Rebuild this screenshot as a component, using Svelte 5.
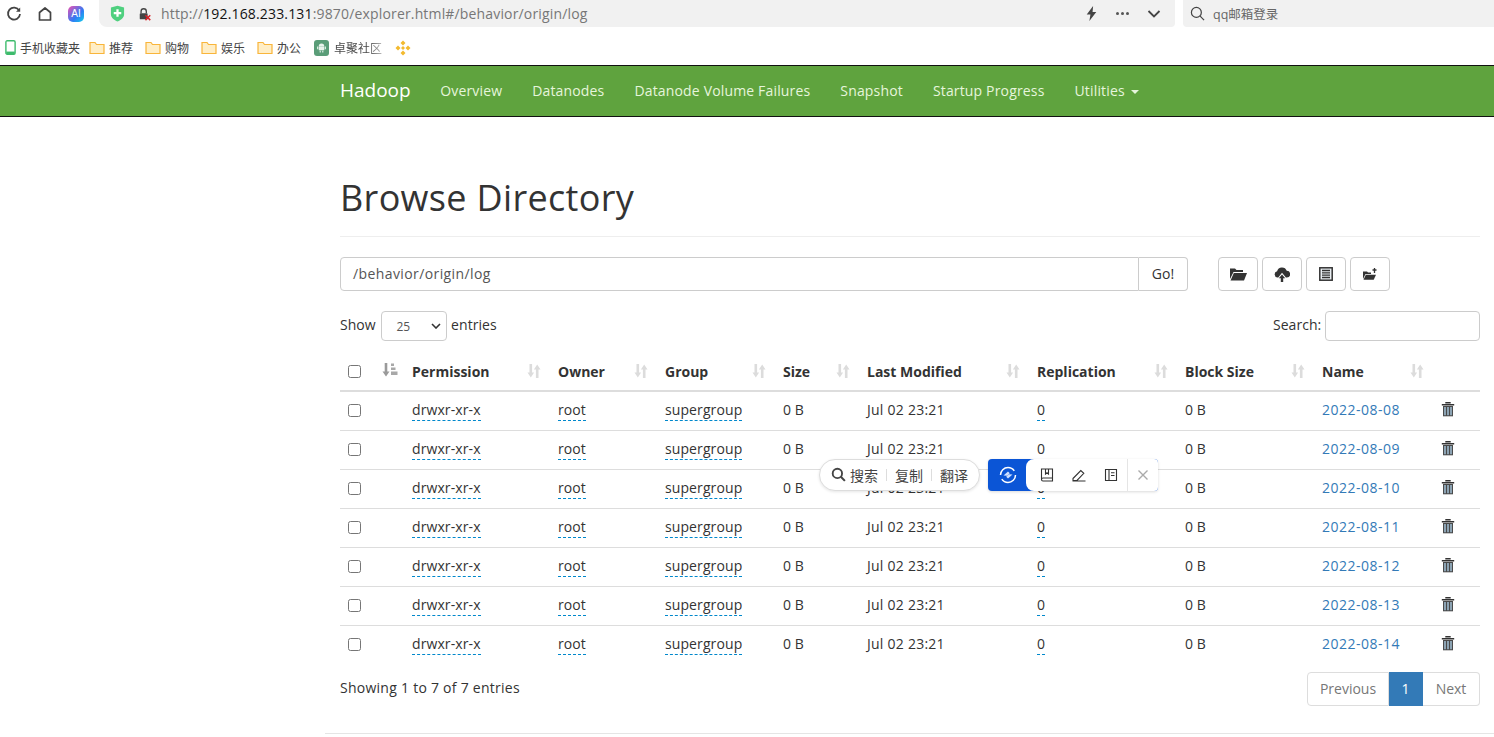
<script>
  const rows = ['2022-08-08','2022-08-09','2022-08-10','2022-08-11','2022-08-12','2022-08-13','2022-08-14'];
  const heads = [['Permission',550],['Owner',657],['Group',775],['Size',859],['Last Modified',1029],['Replication',1177],['Block Size',1314],['Name',1433]];
  const navs = ['Overview','Datanodes','Datanode Volume Failures','Snapshot','Startup Progress'];
  const bookmarks = ['推荐','购物','娱乐','办公'];
</script>

<div class="chrome">
  <div class="topbar">
    <svg class="ic reload" viewBox="0 0 16 16"><path d="M13.2 4.6A6 6 0 1 0 14 8" fill="none" stroke="#444" stroke-width="1.8"/><path d="M14.2 1.6v4.2H10z" fill="#444"/></svg>
    <svg class="ic home" viewBox="0 0 16 16"><path d="M2.5 14V6.5L8 2l5.500 4.500V14z" fill="none" stroke="#444" stroke-width="1.700" stroke-linejoin="round"/></svg>
    <span class="ai">AI</span>
    <div class="addr">
      <svg class="shield" viewBox="0 0 16 18"><path d="M1 2.500 8 .8l7 1.700v7.500c0 3.500-3.500 6-7 7.500-3.500-1.500-7-4-7-7.500z" fill="#4fd07f"/><path d="M8 4.500v8M4 8.500h8" stroke="#fff" stroke-width="2.400"/></svg>
      <svg class="lock" viewBox="0 0 16 16"><path d="M3.500 7V5a3 3 0 0 1 6 0v2" fill="none" stroke="#444" stroke-width="1.500"/><rect x="2" y="7" width="9" height="7" rx="1" fill="#444"/><path d="M8.500 9.500l5.500 5.500M14 9.500l-5.500 5.500" stroke="#d8232a" stroke-width="1.800"/></svg>
      <span class="url">http://<b>192.168.233.131</b>:9870/explorer.html#/behavior/origin/log</span>
      <svg class="bolt" viewBox="0 0 14 16"><path d="M8.500 1 2.500 9h3.500L5 15l6.500-8.500H8z" fill="#444"/></svg>
      <span class="dots"><i></i><i></i><i></i></span>
      <svg class="chev" viewBox="0 0 14 10"><path d="M1.500 2l5.500 5.500L12.500 2" fill="none" stroke="#444" stroke-width="1.800"/></svg>
    </div>
    <div class="search">
      <svg class="mag" viewBox="0 0 16 16"><circle cx="6.800" cy="6.800" r="5.300" fill="none" stroke="#444" stroke-width="1.300"/><path d="m10.800 10.800 4.200 4.200" stroke="#444" stroke-width="1.300"/></svg>
      <span>qq邮箱登录</span>
    </div>
  </div>
  <div class="bookmarks">
    <span class="bm first"><svg class="phone" viewBox="0 0 10 14"><rect x=".7" y=".7" width="8.600" height="12.600" rx="1.200" fill="none" stroke="#3dbb6c" stroke-width="1.300"/><rect x="1" y="10.800" width="8" height="2.400" fill="#3dbb6c"/></svg>手机收藏夹</span>
    {#each bookmarks as b}
      <span class="bm"><svg class="folder" viewBox="0 0 16 14"><path d="M1 12.500V1.500h5l1.500 2H15v9z" fill="#ffeec6" stroke="#f9b53a" stroke-width="1.200"/></svg>{b}</span>
    {/each}
    <span class="bm last"><span class="droid"><svg viewBox="0 0 12 12"><path d="M3 4.500a3 3 0 0 1 6 0zM3 5h6v4H3zM1.200 5h1.200v3H1.200zM9.600 5h1.200v3H9.600zM4 9.500h1.200V11.500H4zM6.800 9.500H8V11.500H6.800z" fill="#e8f3ec"/></svg></span><span class="fade">卓聚社区</span></span>
    <svg class="bnb" viewBox="0 0 16 16"><path d="M8 .5l2.500 2.500L8 5.500 5.500 3zM3 5.500 5.500 8 3 10.500.5 8zM13 5.500 15.500 8 13 10.500 10.500 8zM8 6 10 8 8 10 6 8zM8 10.500l2.500 2.500L8 15.500 5.500 13z" fill="#f3ba2f"/></svg>
  </div>
</div>

<nav class="navbar">
  <div class="nav-inner">
    <span class="brand">Hadoop</span>
    {#each navs as n}<span class="nav-link">{n}</span>{/each}
    <span class="nav-link">Utilities <i class="caret"></i></span>
  </div>
</nav>

<main class="container">
  <header class="page-header"><h1>Browse Directory</h1></header>

  <div class="path-row">
    <div class="input-group">
      <div class="path-input">/behavior/origin/log</div>
      <div class="go">Go!</div>
    </div>
    <div class="tools">
      <span class="tool"><svg viewBox="0 0 18 14" width="18" height="14"><path d="M1 12V1.500h5l1.500 1.500H14v2H4.500z" fill="#333"/><path d="M4.800 6H18l-3 7.500H1.500z" fill="#333"/></svg></span>
      <span class="tool"><svg viewBox="0 0 16 15" width="16" height="15"><path d="M4.300 10.500H3.500a3.200 3.200 0 0 1-.4-6.300 5 5 0 0 1 9.600-.4 3.300 3.300 0 0 1 .2 6.700h-1L8 5.800z" fill="#333"/><path d="M8 7.500l3.200 3.700H9.200V15H6.800v-3.800H4.800z" fill="#333"/></svg></span>
      <span class="tool"><svg viewBox="0 0 14 14" width="14" height="14"><rect x=".8" y=".8" width="12.400" height="12.400" fill="#e9eef2" stroke="#333" stroke-width="1.500"/><path d="M3 3.500h8M3 5.800h8M3 8.200h8M3 10.500h8" stroke="#333" stroke-width="1.300"/></svg></span>
      <span class="tool"><svg viewBox="0 0 16 14" width="16" height="14"><path d="M1 12V4.500h4l1 1h3v1.500H3.500z" fill="#333"/><path d="M3.800 7.800H14l-2.300 5H1.500z" fill="#333"/><path d="M12.500 1v5M10.500 3h4" stroke="#333" stroke-width="1.300"/></svg></span>
    </div>
  </div>

  <div class="dt-top">
    <label class="len">Show <span class="sel">25<svg viewBox="0 0 10 6" width="10" height="6"><path d="M1 1l4 4 4-4" fill="none" stroke="#333" stroke-width="1.600"/></svg></span> entries</label>
    <label class="filter">Search: <span class="filter-input"></span></label>
  </div>

  <table>
    <colgroup>
      <col class="c34"/><col class="c30"/><col class="c146"/><col class="c107"/><col class="c118"/><col class="c84"/><col class="c170"/><col class="c148"/><col class="c137"/><col class="c119"/><col class="c47"/>
    </colgroup>
    <thead>
      <tr>
        <th class="chk"><span class="box"></span></th>
        <th class="sort-active"><svg class="srt" viewBox="0 0 16 14" width="16" height="14"><path d="M4 0v11" fill="none" stroke="#9a9a9a" stroke-width="2.600"/><path d="M.5 8.500h7L4 13.500z" fill="#9a9a9a"/><path d="M9 .5h3V3H9zM9 4.500h4.500V7H9zM9 8.500h6.500V12H9z" fill="#a8a8a8"/></svg></th>
        {#each heads as h}
          <th>{h[0]}<svg class="srt" viewBox="0 0 14 14" width="14" height="14"><path d="M3.800 0v10M10.200 14V4" fill="none" stroke="#dcdcdc" stroke-width="2.600"/><path d="M.5 8.500h6.600l-3.300 5zM6.900 5.500h6.600L10.200.5z" fill="#dcdcdc"/></svg></th>
        {/each}
        <th></th>
      </tr>
    </thead>
    <tbody>
      {#each rows as r}
        <tr>
          <td class="chk"><span class="box"></span></td>
          <td></td>
          <td><span class="ed">drwxr-xr-x</span></td>
          <td><span class="ed">root</span></td>
          <td><span class="ed">supergroup</span></td>
          <td>0 B</td>
          <td class="date">Jul 02 23:21</td>
          <td><span class="ed">0</span></td>
          <td>0 B</td>
          <td class="date"><span class="lnk">{r}</span></td>
          <td><svg class="trash" viewBox="0 0 14 15" width="14" height="15"><path d="M5 1.500V.7h4v.8M.8 2.700h12.400" fill="none" stroke="#333" stroke-width="1.400"/><rect x="2" y="4" width="10" height="10.300" fill="#4a4a4a"/><path d="M4 5v8.300M7 5v8.300M10 5v8.300" stroke="#a9c9e0" stroke-width="1.400"/></svg></td>
        </tr>
      {/each}
    </tbody>
  </table>

  <div class="dt-bottom">
    <span class="info">Showing 1 to 7 of 7 entries</span>
    <div class="pager">
      <span class="pg prev">Previous</span><span class="pg on">1</span><span class="pg next">Next</span>
    </div>
  </div>
  <hr class="foot"/>
</main>

<div class="popup">
  <div class="pill">
    <svg viewBox="0 0 16 16" width="15" height="15"><circle cx="6.800" cy="6.800" r="5" fill="none" stroke="#444" stroke-width="2"/><path d="m10.500 10.500 4.300 4.300" stroke="#444" stroke-width="2.200"/></svg>
    <span>搜索</span><i></i><span>复制</span><i></i><span>翻译</span>
  </div>
  <div class="tray">
    <span class="blue"><svg viewBox="0 0 18 18" width="18" height="18"><circle cx="9" cy="9" r="7.500" fill="none" stroke="#fff" stroke-width="1.500" stroke-dasharray="19 4.500"/><path d="M4.500 9.500 9 5.500l1.800 1.800L8 9.800zM13.500 8.500 9 12.500l-1.800-1.800L10 8.200z" fill="#cfe0ff"/></svg></span>
    <div class="tray-icons">
      <svg viewBox="0 0 14 14" width="14" height="14"><path d="M1.500 11.500V1h11v12H3a1.500 1.500 0 0 1 0-3h9.500M5.500 1v5l1.500-1.200L8.500 6V1" fill="none" stroke="#333" stroke-width="1.100"/></svg>
      <svg viewBox="0 0 14 14" width="14" height="14"><path d="M1 10.500 8.800 2.500l3 2.800-6.800 7.200H1zM.5 13h13" fill="none" stroke="#333" stroke-width="1.100"/></svg>
      <svg viewBox="0 0 14 14" width="14" height="14"><path d="M1.500 1.500h11v11h-11zM5 1.500v11M7 4.800h3.500M7 7.500h3.500" fill="none" stroke="#333" stroke-width="1.100"/></svg>
      <b></b>
      <svg class="x" viewBox="0 0 12 12" width="12" height="12"><path d="M1.500 1.500l9 9M10.500 1.500l-9 9" stroke="#aaa" stroke-width="1.400"/></svg>
    </div>
  </div>
</div>

<style>
  :global(body) { margin: 0; background: #fff; overflow: hidden; }
  :global(#app) { position: relative; height: 737px; overflow: hidden; font-family: "Open Sans", "Noto Sans CJK SC", sans-serif; font-size: 14px; color: #333; }

  .chrome { height: 65px; }
  .topbar { display: flex; align-items: center; height: 27px; padding-left: 6px; }
  .ic { width: 16px; height: 16px; }
  .home { margin-left: 15px; }
  .ai { margin-left: 15px; width: 16px; height: 16px; border-radius: 5px; background: linear-gradient(135deg, #f04fb0, #2f7bf5 60%, #14d0e8); color: #fff; font: 10px/16px "Liberation Sans", sans-serif; text-align: center; }
  .addr { display: flex; align-items: center; margin-left: 15px; width: 1076px; height: 27px; background: #f1f1f1; border-radius: 0 0 4px 8px; box-sizing: border-box; padding-left: 11px; }
  .shield { width: 15px; height: 17px; }
  .lock { width: 14px; height: 14px; margin-left: 13px; }
  .url { margin-left: 9px; font-size: 14px; color: #777; white-space: nowrap; letter-spacing: .16px; width: 923px; }
  .url b { font-weight: 400; color: #111; }
  .bolt { width: 15px; height: 17px; }
  .dots { display: flex; gap: 2px; margin-left: 17px; }
  .dots i { width: 3px; height: 3px; border-radius: 50%; background: #555; }
  .chev { width: 14px; height: 10px; margin-left: 18px; }
  .search { display: flex; align-items: center; margin-left: 8px; flex: 1; height: 27px; background: #f1f1f1; border-radius: 0 0 0 4px; padding-left: 7px; font-size: 12.500px; color: #666; }
  .mag { width: 15px; height: 15px; margin-right: 8px; }
  .bookmarks { display: flex; align-items: center; height: 38px; padding: 3px 0 0 5px; box-sizing: border-box; font-size: 12px; color: #444; white-space: nowrap; }
  .bm { display: inline-flex; align-items: center; margin-right: 12px; }
  .first { margin-right: 9px; }
  .bm:nth-child(5) { margin-right: 13px; }
  .last { margin-right: 13px; }
  .fade { background: linear-gradient(90deg, #444 70%, #bbb 100%); background-clip: text; -webkit-background-clip: text; color: transparent; }
  .phone { width: 11px; height: 15px; margin-right: 4px; }
  .folder { width: 16px; height: 14px; margin-right: 4px; }
  .droid { display: inline-flex; width: 15px; height: 16px; background: #5a9d78; border-radius: 3px; margin-right: 5px; align-items: center; justify-content: center; }
  .droid svg { width: 11px; height: 11px; }
  .bnb { width: 16px; height: 16px; }

  .navbar { height: 52px; box-sizing: border-box; background: #5fa33e; border-top: 1px solid #111; border-bottom: 1px solid #111; }
  .nav-inner { display: flex; align-items: center; height: 48px; margin-left: 340px; }
  .brand { font-size: 19px; color: #fff; margin-right: 29.500px; }
  .nav-link { color: #e6f5dc; font-size: 14px; margin-right: 30px; white-space: nowrap; letter-spacing: .16px; }
  .caret { display: inline-block; width: 0; height: 0; margin-left: 2px; vertical-align: middle; border-top: 4px solid #e6f5dc; border-left: 4px solid transparent; border-right: 4px solid transparent; }

  .container { width: 1140px; margin-left: 340px; position: relative; }
  .page-header { height: 120px; box-sizing: border-box; border-bottom: 1px solid #eee; }
  h1 { margin: 0; padding-top: 57px; font-size: 36px; line-height: 48px; font-weight: 400; color: #333; letter-spacing: .33px; }
  .path-row { display: flex; margin-top: 20px; height: 34px; }
  .input-group { display: flex; width: 848px; }
  .path-input { flex: 1; height: 34px; box-sizing: border-box; border: 1px solid #ccc; border-radius: 4px 0 0 4px; padding: 0 12px; line-height: 32px; color: #555; letter-spacing: .4px; }
  .go { width: 49px; height: 34px; box-sizing: border-box; border: 1px solid #ccc; border-left: 0; border-radius: 0 4px 4px 0; text-align: center; line-height: 32px; }
  .tools { display: flex; gap: 4px; margin-left: 30px; }
  .tool { width: 40px; height: 34px; box-sizing: border-box; border: 1px solid #ccc; border-radius: 4px; display: flex; align-items: center; justify-content: center; }

  .dt-top { display: flex; justify-content: space-between; align-items: center; margin-top: 20px; height: 30px; }
  .len, .filter { letter-spacing: .05px; }
  .sel { display: inline-flex; align-items: center; justify-content: space-between; width: 66px; height: 30px; box-sizing: border-box; border: 1px solid #ccc; border-radius: 4px; padding: 0 5px 0 14px; vertical-align: middle; font-size: 12px; color: #555; margin: 0 0 0 2px; }
  .filter-input { display: inline-block; width: 155px; height: 30px; box-sizing: border-box; border: 1px solid #ccc; border-radius: 4px; vertical-align: middle; }

  table { width: 1140px; table-layout: fixed; border-collapse: collapse; margin-top: 11px; }
  .c34 { width: 34px; } .c30 { width: 30px; } .c146 { width: 146px; } .c107 { width: 107px; } .c118 { width: 118px; } .c84 { width: 84px; } .c170 { width: 170px; } .c148 { width: 148px; } .c137 { width: 137px; } .c119 { width: 119px; } .c47 { width: 47px; }
  th { height: 39px; box-sizing: border-box; padding: 0 8px; text-align: left; font-weight: 700; border-bottom: 2px solid #ddd; position: relative; white-space: nowrap; }
  td { height: 39px; box-sizing: border-box; padding: 0 8px 2px; border-top: 1px solid #ddd; white-space: nowrap; }
  tbody tr:first-child td { border-top: 0; }
  td.date { padding-bottom: 3px; letter-spacing: .25px; }
  .chk, td.chk { padding: 0 0 0 8px; }
  .box { display: block; width: 13px; height: 13px; box-sizing: border-box; border: 1px solid #767676; border-radius: 2.500px; background: #fff; }
  .srt { position: absolute; right: 9px; top: 12px; }
  .sort-active .srt { right: 6px; top: 11px; }
  .ed { border-bottom: 1px dashed #08c; padding-bottom: 1px; letter-spacing: .1px; }
  .lnk { color: #337ab7; letter-spacing: .5px; }
  .trash { display: block; }

  .dt-bottom { display: flex; justify-content: space-between; align-items: flex-start; margin-top: 8px; }
  .info { padding-top: 6px; letter-spacing: .26px; }
  .pager { display: flex; height: 34px; }
  .pg { box-sizing: border-box; height: 34px; border: 1px solid #ddd; border-left: 0; line-height: 32px; color: #777; text-align: center; }
  .prev { width: 82px; border-left: 1px solid #ddd; border-radius: 4px 0 0 4px; }
  .next { width: 57px; border-radius: 0 4px 4px 0; }
  .on { width: 34px; background: #337ab7; border-color: #337ab7; color: #fff; }
  .foot { position: absolute; left: -15px; top: 616px; width: 1170px; margin: 0; border: 0; border-top: 1px solid #e5e5e5; }

  .popup { position: absolute; left: 819px; top: 459px; display: flex; gap: 8px; font-family: "Noto Sans CJK SC", sans-serif; font-size: 14px; line-height: 18px; color: #444; }
  .pill { display: flex; align-items: center; height: 32px; box-sizing: border-box; width: 161px; padding: 0 0 1px 11px; background: #fff; border: 1px solid #ddd; border-radius: 16px; box-shadow: 0 1px 3px rgba(0,0,0,.1); }
  .pill span { margin-left: 4px; white-space: nowrap; }
  .pill i { width: 1px; height: 12px; background: #ddd; margin: 0 8px 0 8px; }
  .pill i + span { margin-left: 0; }
  .tray { display: flex; height: 32px; box-shadow: 0 1px 3px rgba(0,0,0,.15); border-radius: 4px; background: #0b55d6; }
  .blue { width: 38px; display: flex; align-items: center; justify-content: center; padding-left: 1px; box-sizing: border-box; }
  .tray-icons { display: flex; align-items: center; width: 132px; background: #fff; border-radius: 8px 4px 4px 8px; padding-left: 14px; box-sizing: border-box; gap: 18px; }
  .tray-icons b { width: 1px; height: 32px; background: #e5e5e5; margin: 0 -9px 0 -9px; }
</style>
